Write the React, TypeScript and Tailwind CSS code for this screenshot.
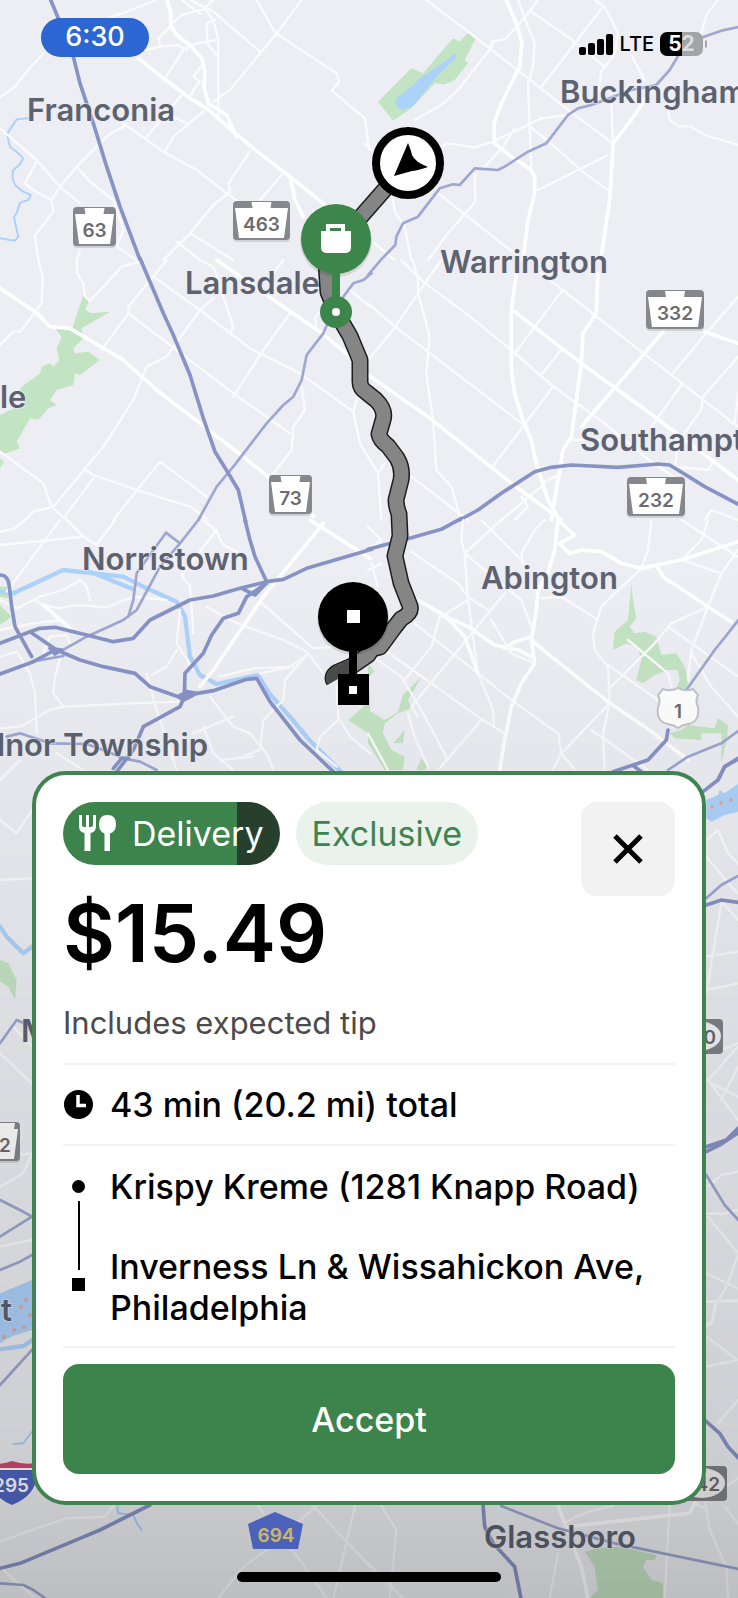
type TileData = {
  x: number;
  y: number;
  minor?: string;
  major?: string;
  highway?: string;
  secondary?: string;
  park?: string;
  water?: string;
  stream?: string;
  river?: string;
};

const tiles: TileData[] = [
  {
    x: 0,
    y: 0,
    stream:
      'M85 355L50 358L22 400L25 420L30 440L55 460L70 475L60 492L38 512L38 535L45 555L70 575L92 585L85 600L60 608L50 640L42 650L50 690L55 710L45 722L0 715',
    minor:
      'M0 292L45 260L80 215L130 160M330 52L380 35L470 0M610 20L640 60L655 120L655 350M545 0L600 40M512 75L545 45L610 28L640 0M570 0L640 35L780 155M905 0L830 100L780 160L690 270L640 305M770 0L825 98L1010 220L1018 245L995 272L1095 355L1108 450M645 60L620 70L622 130L650 165M650 120L590 130L550 150L495 235M440 150L480 140L530 135L560 150M480 135L475 115L515 75M0 385L110 480L180 560L240 610M110 485L75 550L100 570L155 600L180 560L230 500L300 430L325 405L380 375M155 600L160 635L105 705L115 780M230 500L270 545L340 600L370 690L350 740L410 780M370 370L490 455L590 510L680 580L750 630M440 410L495 345L545 285M495 455L520 410L610 335M500 340L560 370M750 455L685 550L690 575L640 615L570 700L530 740L490 780M845 525L780 600M610 190L580 230L600 245L580 270L570 295M530 725L600 780M570 700L700 780M230 780L240 750',
    major:
      'M500 0L512 35L512 75L530 105L575 140L605 175L615 215L612 260L625 310L680 345L710 410M415 175L490 235L570 295L620 325L690 385L760 445L870 530L970 610M870 530L885 600L910 650',
    highway: 'M150 -5L175 55L220 170L240 250L280 370L320 500L360 620L422 785',
  },
  {
    x: 368,
    y: 0,
    park: 'M30 305L130 205L165 220L255 115L275 125L300 98L322 118L290 180L300 190L260 240L230 253L200 250L130 325L75 362Z',
    water: 'M80 305L92 290L170 225L265 160L262 178L215 220L150 300L130 322L95 330Z',
    minor:
      'M175 0L340 125L480 235L600 330L735 430M375 130L360 155L270 270L220 315L140 360M370 125L410 118L460 65L510 0M450 0L480 80L500 130L495 200L480 250L485 380L490 500M490 35L600 110L710 200M705 20L520 260M680 0L710 20L750 100L740 160L700 215L690 280M790 165L830 240M220 440L240 430L320 442L375 425L480 375L520 355L600 345M440 385L405 440L350 500M480 375L560 440L650 520L720 570M720 465L510 570M730 310L735 430M900 330L905 360L930 378L970 380L1010 405L1110 435M1050 0L1015 45L1000 100M320 520L322 605L240 700L180 780M210 580L440 760M75 600L80 635L110 680L130 780M20 730L80 780M-10 430L10 450',
    major:
      'M415 0L445 70L462 130L455 200L400 310L378 370L380 430L430 470L490 510L500 530L500 580L480 660L465 780M735 440L725 600L700 770M735 430L790 360L850 270',
    secondary:
      'M1115 80L1060 92L980 120L935 160L905 210L865 255L790 270L670 315L630 325L600 345L535 430L480 455L410 500L390 510L320 505L275 555L255 553L215 565L150 650L105 670L85 710L82 735L40 778L0 825',
  },
  {
    x: 0,
    y: 260,
    park: 'M250 105L265 125L255 150L275 160L330 155L245 205L250 235L220 265L225 280L265 275L300 300L240 345L225 340L220 375L170 390L150 420L170 435L145 445L115 480L90 475L50 545L60 565L20 580L0 578L0 465L75 430L60 385L120 340L125 320L150 310L160 320L178 300L170 265L185 230L165 205L215 210ZM0 595L12 605L0 625Z',
    minor:
      'M115 0L128 50L125 130L60 215L40 215L0 255M230 0L232 40L250 70L255 110L270 122L320 70L365 20L420 5M500 0L385 140L385 160L530 270L700 400L870 520M385 160L305 270M640 115L600 150L500 290L440 320L400 420L310 560L160 740L100 755L75 780M460 50L600 150L750 265L900 340L1060 455M690 220L700 200L660 80L640 20L600 0M870 160L790 270L700 410M905 380L915 450L880 500L875 570L820 640M0 575L130 670L155 740L200 780M250 625L280 645L410 690L570 740L625 780M280 655L190 775M480 605L340 780M480 605L620 710M1075 400L1060 455L1080 550L1110 600M950 210L945 170L980 140M1050 90L1110 140M850 0L820 40',
    major:
      'M0 85L105 155L150 200L210 205L370 300L470 390L600 490L730 590L840 680L940 770M650 0L850 140L960 215L1050 290',
    highway: 'M420 -5L490 160L520 225L570 345L610 475L645 575L685 640L715 690L737 785',
    secondary:
      'M1115 40L1090 60L1060 70L1000 150L970 220L920 285L905 360L880 410L850 435L800 490L700 620L650 680L595 780',
  },
  {
    x: 368,
    y: 260,
    minor:
      'M100 0L165 65L300 165L430 270L550 375L710 490L830 590L930 660M0 130L75 195L180 275L460 490M135 0L150 60L150 100L185 230L175 340L195 480L205 630L250 680L280 780M220 0L150 100L75 210L0 300M520 40L680 165L820 275L1000 415L1110 500M580 95L440 280M580 270L520 345M555 380L370 625M1110 110L1010 225L910 345M940 375L850 500M1110 290L1005 410L1000 450L920 560M130 650L300 780M0 590L30 640L40 780M50 610L30 640M610 540L700 540M520 680L400 780M580 640L520 670M460 710L480 740L440 780M930 560L920 620L1020 630L1040 600M1110 400L1100 490M1110 780L1030 750L1010 780',
    major:
      'M445 40L430 150L430 330L440 400L465 480L490 540L505 610L540 720L575 780M440 155L640 310L860 470L1110 660M690 40L685 160L645 220L640 310L610 530L585 570L550 780M885 215L640 500M1010 215L1110 250M0 345L180 470L430 670L580 780',
    highway: 'M275 780L330 750L400 700L500 635L550 622L610 615L750 622L870 612L905 615L930 630L1010 680L1115 735',
  },
  {
    x: 0,
    y: 520,
    park: 'M0 200H22L25 235L0 230ZM0 255L35 290L0 315ZM1110 515L1090 560L1045 600L1110 645Z',
    river:
      'M0 215L40 220L190 150L370 170L430 200L530 245L555 290L570 410L600 465L650 492L770 466M270 155L400 208M775 468L808 520L878 600L928 660L1023 755',
    minor:
      'M0 35L45 25L75 0M0 75L250 50L200 0M180 0L20 215M345 0L290 75L250 50M0 240L50 265L120 230L190 210L240 180L260 200L270 240M50 265L100 240L130 255L180 265L230 255L320 262L400 230L500 240M130 255L210 325M0 330L100 310L180 300M610 0L650 35L670 75L740 110M650 30L545 165L570 200L580 340M620 260L700 305L850 360L920 395L970 460M780 245L940 385L1000 380M900 150L820 190M540 270L530 370L580 450M530 390L500 440L455 465M440 460L470 570L500 660L530 750M180 415L165 470L160 520L190 560L390 550L540 545M0 625L60 620L150 570L190 560M50 395L90 460L105 520L110 640M0 410L50 395M660 470L760 445L870 440L920 405L855 480L850 540L790 600L780 690L730 710M630 530L700 620L750 640L800 700L820 750M610 620L640 700L700 750M580 640L700 590M660 720L760 710M1010 500L1015 600L960 650L950 690L1010 740M1020 600L1050 650L1110 700M130 400L150 350L200 345L210 370M170 700L250 750M880 440L780 460',
    major: 'M970 10L790 230L640 450L600 500M930 0L1110 115M130 255L210 325',
    highway:
      'M0 165Q25 165 28 200L35 260L45 320L95 410M0 370L90 335L120 325L165 322L260 345L340 365L400 355L450 300L570 240L640 228L720 205L800 185L850 178L920 145L1115 88M0 462L100 425L165 390M90 335L170 390L240 420L310 440L405 460L450 500L535 530L640 512L740 478L770 475L810 545L900 660L1000 755M800 190L740 230L715 280L670 295L635 345L610 400L555 460L553 530L540 560L430 620L400 690L350 755M735 0L750 60L765 110L800 185M725 205L765 225L800 188M535 530L560 515L590 520L550 540ZM150 385L185 390L165 402ZM340 745L365 715L385 715',
    secondary:
      'M595 0L540 70L480 140L410 270L370 300L260 350L180 395M540 70L498 38L410 160L400 240L385 290M20 650L60 640L150 670L260 672L310 690L370 715L420 725L470 750M95 425L190 408',
  },
  {
    x: 368,
    y: 520,
    park: 'M790 190L795 240L805 295L785 320L800 340L830 335L865 350L880 405L925 400L950 440L960 480L955 520L920 520L935 480L930 450L900 450L860 465L825 490L805 480L820 420L810 385L775 370L735 390L740 335L780 300ZM905 640L940 630L960 615L1040 625L1050 595L1080 615L1078 650L1060 730L1060 640L1000 640L1000 660L920 655ZM0 430L20 455L0 470ZM160 470L120 540L130 565L90 580L50 610L45 640L70 690L110 710L105 750L50 750L0 670V570L50 600L90 575L105 525ZM110 630L105 670L75 670ZM145 750L160 715L180 740L165 750Z',
    minor:
      'M285 0L280 60L290 100L300 240L330 460L375 570L378 615M130 95L180 130L270 190L300 230L360 270M580 230L690 300M520 235L580 230M530 0L500 30L460 100L465 130M400 0L290 100L460 240L490 320M340 0L460 120M850 0L840 90L820 145L700 260L675 340L680 390L720 440L725 545L705 640L710 750M940 0L1110 110M1020 0L1000 60L940 120L1060 160L1110 90M1060 160L1020 260L970 390L960 480M970 400L1030 500L1110 590M900 320L1110 470M1020 260L910 310L860 370L720 510M720 435L870 540M725 550L580 700L555 750M670 630L770 700L840 750M410 220L130 560L150 590M215 290L190 380L110 480M50 390L330 590L410 640M0 400L100 470L160 570L240 720M140 310L330 460L430 540L570 640L580 700L620 750M340 600L210 750M300 240L220 290M500 430L430 400L370 300M120 580L140 650L180 740M0 640L60 750M0 90L40 60L0 20M10 130L30 200M40 130L0 150M910 500L900 460L780 360',
    major:
      'M570 0L560 90L540 160L510 210L505 270L490 360L500 430L460 490L430 560L410 660L395 750M570 0L620 45L575 70L605 100L640 90L700 95L760 130L820 145L940 120L1110 65M870 145L890 175L930 200L1020 260L1090 305M150 240L235 290L300 320L380 375L450 390L490 410M235 290L290 350L330 460M490 360L550 410L720 545L830 620L960 720M410 385L440 365L490 350',
    highway: 'M0 88L125 55L220 28L280 -5M735 755L840 720L895 660L900 630M800 740L820 755M1115 715L1070 740L1050 780',
    secondary: 'M1115 295L1080 340L1040 390L955 510M900 750L960 710L1060 670L1115 630',
  },
  {
    x: 20,
    y: 760,
    park: 'M-60 600L-35 610L-10 660L-15 720L-35 680L-60 665Z',
    minor: 'M36 150L-10 220L-60 180M-60 360L36 355M-20 800L36 860M-60 60L0 0',
    river: 'M-60 500L-40 530L10 580L36 560',
    secondary: 'M-60 850L-10 780L36 800',
  },
  {
    x: 368,
    y: 760,
    water: 'M1015 120L1050 105L1055 90L1070 100L1110 72V155L1070 165L1030 185L1015 175Z',
    minor:
      'M1015 240L1050 210L1080 280L1110 310M1015 290L1090 380L1110 400M1060 430L1015 700M1015 590L1110 575M1015 690L1110 670M1065 430L1110 480M1060 870L1110 850',
    highway: 'M1005 95L1050 60L1070 20L1110 -5M1015 435L1060 420L1115 428',
    secondary: 'M1115 345L1060 375L1015 415',
  },
  {
    x: 20,
    y: 1040,
    water: 'M-60 760L36 720V870L-60 900Z',
    minor: 'M-60 40L36 130M-60 350L36 340M-60 440L10 400L36 340M-60 620L36 600',
    secondary: 'M-60 480L0 510L36 530L-60 590M-60 690L0 665L36 645',
  },
  {
    x: 368,
    y: 1040,
    minor:
      'M1110 20L1020 120L1110 240M1110 80L1060 180M1030 130L1110 170M1020 440L1060 405L1110 395M1020 530L1110 640M1110 510L1060 522L1015 520M1015 700L1110 745M1015 785L1110 785M1110 645L1075 740L1040 800L1030 850L1015 860',
    highway: 'M1015 320L1075 300L1115 260M1015 335L1060 312L1115 275',
    secondary: 'M1015 405L1070 495L1115 545',
  },
  {
    x: 0,
    y: 1300,
    water: 'M0 0H95V75L50 100L0 130Z',
    stream: 'M100 390L85 410L70 430L40 432M352 618L354 640L400 645L412 672L425 690',
    river: 'M0 148L40 142L70 138L100 118',
    minor:
      'M0 725L110 685L200 655L315 650L340 618M10 810L100 890M775 618L790 640M655 894L730 800L800 750L950 618M940 618L1110 800M1065 618L1000 894M870 740L980 894',
    highway: 'M450 615L300 690L240 715L60 790L0 805',
    secondary: 'M100 145L0 255M0 850L70 855L100 870L135 894',
  },
  {
    x: 368,
    y: 1300,
    park: 'M650 755L690 745L745 740L800 750L865 765L860 780L835 780L825 800L850 840L885 850V894H665L690 870L680 800Z',
    minor:
      'M1015 5L1110 0M1045 10L1035 60L1015 75M1015 110L1110 180L1015 200M1110 300L1050 370M40 618L85 690L65 894M0 790L100 890M590 670Q640 635 735 618M570 760L545 894M905 618L890 894M1010 600L1025 690L1075 800L1080 894M1070 620L1110 670M1110 535L1080 555M980 610L1020 630',
    major: 'M570 618L590 670L640 800L660 894M600 680L760 662L965 640L985 600',
    highway: 'M345 612L350 680L375 730L440 800L460 900M1010 360L1055 400L1080 440L1115 478',
    secondary: 'M400 618L570 685L740 730L1115 808',
  },
];

const places = [
  { name: 'Franconia', x: 27, y: 121 },
  { name: 'Buckingham', x: 560, y: 103 },
  { name: 'Warrington', x: 440, y: 273 },
  { name: 'Lansdale', x: 185, y: 294 },
  { name: 'le', x: 0, y: 408 },
  { name: 'Southampton', x: 580, y: 451 },
  { name: 'Norristown', x: 82, y: 570 },
  { name: 'Abington', x: 481, y: 589 },
  { name: 'M', x: 21, y: 1042 },
  { name: 't', x: 1, y: 1321 },
  { name: 'Glassboro', x: 484, y: 1548 },
];

const stateRoutes = [
  { label: '63', x: 73, y: 207, w: 43 },
  { label: '463', x: 233, y: 201, w: 57 },
  { label: '73', x: 269, y: 475, w: 43 },
  { label: '332', x: 646, y: 290, w: 58 },
  { label: '232', x: 627, y: 477, w: 58 },
  { label: '2', x: -10, y: 1122, w: 30 },
];

const routePath =
  'M408 163L336 245M326 262L328 292L336 312L350 336L360 360L360 382Q360 388 366 392L376 400Q386 410 383 420L379 434Q380 440 388 446L397 458Q403 468 401 480L396 500Q396 506 399 514L400 536L395 556L401 583L410 606Q412 613 401 619L394 628L380 647L372 649L368 655L352 666L338 672Q331 676 334 681';

function Tile({ tile }: { tile: TileData }) {
  return (
    <g transform={`translate(${tile.x} ${tile.y}) scale(${1 / 3})`} fill="none" strokeLinecap="round" strokeLinejoin="round">
      <path d={tile.park} fill="#c3e4c3" />
      <path d={tile.water} fill="#add2fa" />
      <path d={tile.stream} stroke="#add2fa" strokeWidth="6" />
      <path d={tile.river} stroke="#add2fa" strokeWidth="13" />
      <path d={tile.minor} stroke="#fbfbfd" strokeWidth="7" />
      <path d={tile.major} stroke="#ffffff" strokeWidth="11" />
      <path d={tile.secondary} stroke="#9da7d0" strokeWidth="8" />
      <path d={tile.highway} stroke="#8793c5" strokeWidth="11" />
    </g>
  );
}

function Keystone({ label, x, y, w }: { label: string; x: number; y: number; w: number }) {
  const m = w / 2;
  return (
    <g transform={`translate(${x} ${y})`}>
      <rect x="0" y="2" width={w} height="39" rx="4" fill="#000" opacity=".12" />
      <rect width={w} height="39" rx="4" fill="#85878c" />
      <path d={`M2 7H${m - 9}L${m - 10} 1H${m + 10}L${m + 9} 7H${w - 2}L${w - 6} 37H6Z`} fill="#fff" />
      <text x={m} y="30" textAnchor="middle" className="fill-[#6b6b70] text-[19px] font-semibold">
        {label}
      </text>
    </g>
  );
}

function RoundShield({ label, x, y }: { label: string; x: number; y: number }) {
  return (
    <g transform={`translate(${x} ${y})`}>
      <rect width="50" height="35" rx="4" fill="#808287" />
      <ellipse cx="25" cy="17" rx="23" ry="15" fill="#f4f4f5" />
      <text x="43" y="25" textAnchor="end" className="fill-[#68686e] text-[19px] font-semibold">
        {label}
      </text>
    </g>
  );
}

function RouteMap() {
  return (
    <svg
      viewBox="0 0 738 1598"
      preserveAspectRatio="xMidYMin slice"
      role="img"
      aria-label="Route map"
      className="absolute inset-0 h-full w-full bg-[#edeef3]"
    >
      <defs>
        <linearGradient id="shade" x1="0" y1="0" x2="0" y2="1">
          <stop offset="0.35" stopColor="#000" stopOpacity="0" />
          <stop offset="0.6" stopColor="#000" stopOpacity="0.06" />
          <stop offset="0.9" stopColor="#000" stopOpacity="0.13" />
          <stop offset="1" stopColor="#000" stopOpacity="0.2" />
        </linearGradient>
      </defs>
      {tiles.map((tile) => (
        <Tile key={`${tile.x}-${tile.y}`} tile={tile} />
      ))}
      <g fill="#dfa9a6">
        <circle cx="712" cy="807" r="2" />
        <circle cx="721" cy="803" r="2" />
        <circle cx="731" cy="800" r="2" />
        <circle cx="26" cy="1300" r="2" />
        <circle cx="21" cy="1307" r="2" />
        <circle cx="30" cy="1315" r="2" />
        <circle cx="24" cy="1327" r="2" />
        <circle cx="14" cy="1330" r="2" />
        <circle cx="4" cy="1337" r="2" />
      </g>
      <g className="fill-[#5d6271] text-[31px] font-semibold" stroke="#edeef3" strokeWidth="2" strokeOpacity=".6" paintOrder="stroke">
        {places.map((p) => (
          <text key={p.name} x={p.x} y={p.y}>
            {p.name}
          </text>
        ))}
        <text x="208" y="756" textAnchor="end">
          dnor Township
        </text>
      </g>
      {stateRoutes.map((r) => (
        <Keystone key={r.label} {...r} />
      ))}
      <RoundShield label="0" x={673} y={1019} />
      <RoundShield label="42" x={677} y={1466} />
      <path
        d="M663 689Q670 692 678 688Q686 692 693 689L698 695Q695 701 698 707Q700 722 688 724Q682 725 678 728Q674 725 668 724Q656 722 658 707Q661 701 658 695Z"
        fill="#fff"
        stroke="#c4c4cb"
        strokeWidth="2"
      />
      <text x="678" y="718" textAnchor="middle" className="fill-[#6b6b70] text-[19px] font-semibold">
        1
      </text>
      <path d="M-12 1468H36Q40 1494 12 1505Q-12 1496 -12 1468Z" fill="#5065c4" />
      <path d="M-12 1464Q2 1465 12 1461Q24 1465 35 1463V1468H-12Z" fill="#d24a70" />
      <path d="M-12 1469H36" stroke="#fff" strokeWidth="2" />
      <text x="29" y="1492" textAnchor="end" className="fill-white text-[19px] font-semibold">
        295
      </text>
      <path d="M275 1512L303 1524L298 1549H253L248 1524Z" fill="#5c76e0" />
      <text x="276" y="1542" textAnchor="middle" className="fill-[#f5dd7a] text-[19px] font-semibold">
        694
      </text>
      <rect width="738" height="1598" fill="url(#shade)" />

      <g fill="none" strokeLinejoin="round">
        <path d={routePath} stroke="#1c1c1c" strokeWidth="17" />
        <path d={routePath} stroke="#858585" strokeWidth="14" />
        <path d="M352 666L338 672Q331 676 334 681" stroke="#4a4a4a" strokeWidth="14" />
      </g>

      <circle cx="408" cy="163" r="32" fill="#fff" stroke="#000" strokeWidth="8" />
      <path d="M394 176L408 143Q411 150 412 155Q415 162 428 167Q416 171 412 171Z" />

      <circle cx="336" cy="241" r="36" fill="#000" opacity=".1" />
      <path d="M336 239V312" stroke="#3c864c" strokeWidth="8" />
      <circle cx="336" cy="239" r="35" fill="#3c864c" />
      <circle cx="336" cy="312" r="16" fill="#3c864c" />
      <circle cx="336" cy="312" r="4" fill="#fff" />
      <path
        d="M326 224H345V231H351V247Q351 253 345 253H327Q321 253 321 247V231H326ZM330 228V231H341V228Z"
        fill="#fff"
        fillRule="evenodd"
      />

      <circle cx="353" cy="619" r="36" fill="#000" opacity=".1" />
      <circle cx="353" cy="617" r="35" />
      <path d="M353 650V676" stroke="#000" strokeWidth="8" />
      <path d="M338 674H369V705H338Z" />
      <path d="M347 610H360V623H347ZM349 686H357V694H349Z" fill="#fff" />
    </svg>
  );
}

function StatusBar() {
  return (
    <header className="relative flex justify-between pt-[18px] pr-[31px] pl-[41px]">
      <div className="flex h-[39px] w-[108px] items-center justify-center rounded-full bg-[#2c66d2] text-[27px] font-medium text-white">
        6:30
      </div>
      <div className="flex h-[52px] items-center gap-[6px]">
        <svg viewBox="0 0 34 21" className="h-[21px] w-[34px]" aria-label="Signal strength">
          <rect y="13" width="7" height="8" rx="2" />
          <rect x="9" y="9" width="7" height="12" rx="2" />
          <rect x="18" y="5" width="7" height="16" rx="2" />
          <rect x="27" width="7" height="21" rx="2" />
        </svg>
        <span className="text-[20px] font-medium">LTE</span>
        <div className="flex items-center gap-[2px]">
          <span className="flex h-6 w-[43px] items-center justify-center rounded-[7px] bg-[linear-gradient(to_right,#000_52%,#a3a4a8_52%)] text-[21px] font-bold">
            <span className="text-white">5</span>
            <span className="text-[#dcdde1]">2</span>
          </span>
          <span className="h-2 w-[2px] rounded-r bg-[#a3a4a8]" />
        </div>
      </div>
    </header>
  );
}

function CutleryIcon() {
  return (
    <svg viewBox="0 0 37 37" className="h-[37px] w-[37px]" fill="#fff" aria-hidden="true">
      <path d="M0 0H3V10Q3 12 5 12H7V0H10V12H12Q14 12 14 10V0H17V11Q17 17 11.500 18V36H5.500V18Q0 17 0 11Z" />
      <path d="M28.500 0Q37 0 37 9Q37 17 31 18.500V36H25.500V18.500Q20 17 20 9Q20 0 28.500 0Z" />
    </svg>
  );
}

function OfferCard() {
  return (
    <section
      aria-label="Delivery offer"
      className="relative mx-8 mt-auto rounded-[34px] border-4 border-[#3f8350] bg-white p-[27px]"
    >
      <div className="flex items-start justify-between border-b-2 border-[#f2f2f2] pb-5">
        <div>
          <div className="flex gap-4 text-[34px] leading-[41px]">
            <span className="flex h-[63px] items-center gap-4 rounded-full bg-[linear-gradient(to_right,#3d834c_80%,#26402d_80%)] px-4 text-white">
              <CutleryIcon />
              Delivery
            </span>
            <span className="flex h-[63px] items-center rounded-full bg-[#e9f3eb] px-4 text-[#3f8350]">Exclusive</span>
          </div>
          <h1 className="mt-[26px] text-[80px] leading-[84px] font-semibold">$15.49</h1>
          <p className="mt-7 text-[31px] leading-10 text-[#4b4b4b]">Includes expected tip</p>
        </div>
        <button
          type="button"
          aria-label="Decline"
          className="flex h-[94px] w-[94px] items-center justify-center rounded-[16px] bg-[#f2f2f2]"
        >
          <svg viewBox="0 0 30 30" className="h-[30px] w-[30px]" aria-hidden="true">
            <path d="M2 2L28 28M28 2L2 28" stroke="#000" strokeWidth="5" />
          </svg>
        </button>
      </div>

      <div className="flex h-[81px] items-center gap-4 border-b-2 border-[#f2f2f2]">
        <svg viewBox="0 0 31 31" className="h-[31px] w-[31px]" aria-hidden="true">
          <circle cx="15.500" cy="15.500" r="14.500" />
          <path d="M15 6V16.500H23" fill="none" stroke="#fff" strokeWidth="3.500" />
        </svg>
        <p className="text-[34px] leading-[41px] font-medium">43 min (20.2 mi) total</p>
      </div>

      <div className="flex gap-4 border-b-2 border-[#f2f2f2] pt-5 pb-[18px]">
        <div className="flex w-[31px] shrink-0 flex-col items-center gap-2 pt-[14px] pb-[37px]" aria-hidden="true">
          <span className="h-[13px] w-[13px] rounded-full bg-black" />
          <span className="w-[2px] flex-1 bg-black" />
          <span className="h-[13px] w-[13px] bg-black" />
        </div>
        <ol className="flex flex-col gap-[39px] text-[34px] leading-[41px] font-medium">
          <li>Krispy Kreme (1281 Knapp Road)</li>
          <li>Inverness Ln &amp; Wissahickon Ave, Philadelphia</li>
        </ol>
      </div>

      <button
        type="button"
        className="mt-4 h-[110px] w-full rounded-[16px] bg-[#3d834c] text-[34px] font-medium text-white"
      >
        Accept
      </button>
    </section>
  );
}

export default function App() {
  return (
    <main className="relative flex min-h-screen flex-col overflow-hidden font-['Inter','Liberation_Sans',sans-serif] text-black">
      <RouteMap />
      <StatusBar />
      <OfferCard />
      <footer className="relative flex h-[93px] items-end justify-center pb-4">
        <span className="h-[10px] w-[264px] rounded-full bg-black" />
      </footer>
    </main>
  );
}
